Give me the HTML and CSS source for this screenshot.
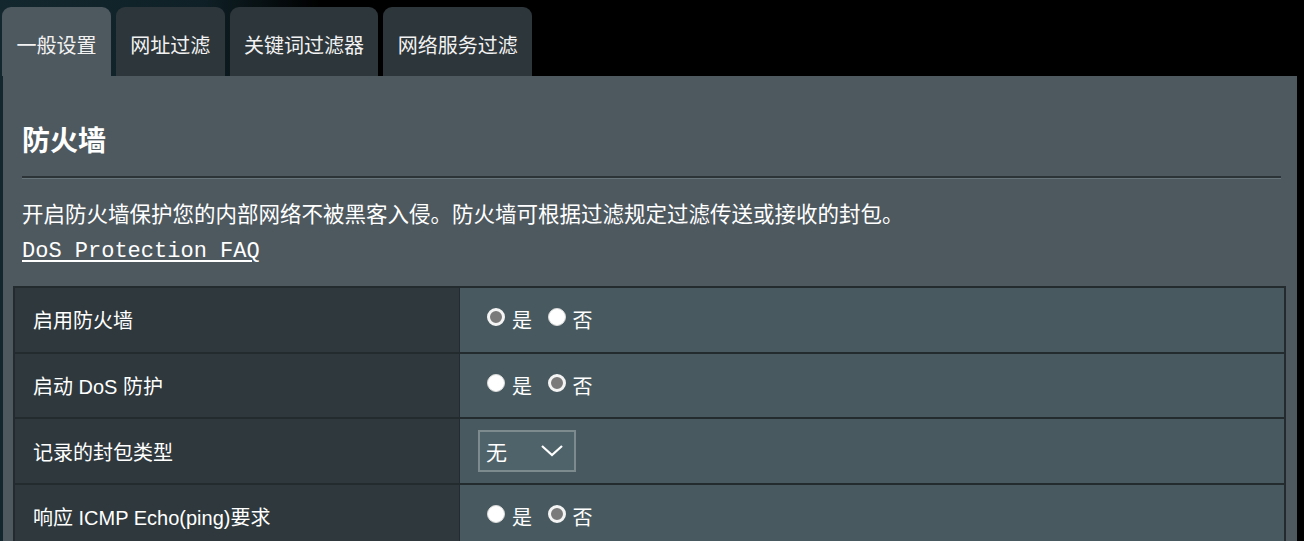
FILE: index.html
```html
<!DOCTYPE html>
<html lang="zh-CN">
<head>
<meta charset="utf-8">
<title>防火墙</title>
<link rel="stylesheet" href="styles.css">
</head>
<body>
<div class="page">
  <nav class="tabs">
    <div class="tab active">一般设置</div>
    <div class="tab">网址过滤</div>
    <div class="tab">关键词过滤器</div>
    <div class="tab">网络服务过滤</div>
  </nav>
  <section class="panel">
    <h1 class="title">防火墙</h1>
    <div class="rule"></div>
    <p class="desc">开启防火墙保护您的内部网络不被黑客入侵。防火墙可根据过滤规定过滤传送或接收的封包。</p>
    <a class="faq" href="#">DoS Protection FAQ</a>
    <table class="settings">
      <tr>
        <th>启用防火墙</th>
        <td>
          <span class="opt"><span class="radio checked"></span>是</span>
          <span class="opt"><span class="radio"></span>否</span>
        </td>
      </tr>
      <tr>
        <th>启动 DoS 防护</th>
        <td>
          <span class="opt"><span class="radio"></span>是</span>
          <span class="opt"><span class="radio checked"></span>否</span>
        </td>
      </tr>
      <tr>
        <th>记录的封包类型</th>
        <td>
          <div class="select"><span>无</span>
            <svg class="chev" width="24" height="14" viewBox="0 0 24 14"><polyline points="2,2 12,11 22,2" fill="none" stroke="#fff" stroke-width="2.2"/></svg>
          </div>
        </td>
      </tr>
      <tr>
        <th>响应 ICMP Echo(ping)要求</th>
        <td>
          <span class="opt"><span class="radio"></span>是</span>
          <span class="opt"><span class="radio checked"></span>否</span>
        </td>
      </tr>
    </table>
  </section>
</div>
</body>
</html>
```
FILE: styles.css
```css
html, body {
  margin: 0;
  padding: 0;
  height: 100%;
  overflow: hidden;
}
body {
  background: linear-gradient(90deg, #13272e 0, #0f2127 200px, #000 320px);
  font-family: "Liberation Sans", "Noto Sans CJK SC", sans-serif;
  color: #fff;
}
.page {
  padding-left: 3px;
  width: 1294px;
}
.tabs {
  display: flex;
  gap: 5px;
  padding-top: 7px;
  margin-left: -1px;
}
.tab {
  height: 69px;
  box-sizing: border-box;
  padding: 27px 14.4px 0;
  background: #2d363b;
  border-radius: 9px 9px 0 0;
  font-size: 20px;
  line-height: 24px;
  color: #f2f2f2;
}
.tab.active {
  background: #4e595f;
}
.panel {
  background: #4e595f;
  padding: 49px 0 0 0;
  height: 480px;
}
.title {
  margin: 0 0 0 19px;
  font-size: 28px;
  line-height: 34px;
  font-weight: bold;
  color: #fff;
}
.rule {
  margin: 17px 16px 0 19px;
  height: 2px;
  background: #2c3438;
  border-bottom: 1px solid #67757b;
}
.desc {
  margin: 23px 0 0 19px;
  font-size: 21.5px;
  line-height: 26px;
  color: #fff;
}
.faq {
  display: inline-block;
  margin: 11px 0 0 19px;
  font-family: "Liberation Mono", monospace;
  font-size: 22px;
  line-height: 26px;
  color: #fff;
  text-decoration: underline;
  text-underline-offset: 3px;
}
.settings {
  margin: 21px 0 0 10px;
  width: 1273px;
  border-collapse: collapse;
  border: 2px solid #242b2f;
}
.settings tr {
  height: 65.7px;
}
.settings th, .settings td {
  border-top: 2px solid #242b2f;
  border-bottom: 2px solid #242b2f;
  padding: 0;
  font-size: 20px;
  font-weight: normal;
  text-align: left;
  vertical-align: middle;
}
.settings th {
  width: 426px;
  padding-left: 18px;
  background: #2e383d;
  border-right: 1px solid #242b2f;
}
.settings td {
  background: #485a60;
  padding-left: 18px;
}
.opt {
  display: inline-flex;
  align-items: center;
  margin-left: 9px;
  margin-right: 1px;
  font-size: 20px;
}
.radio {
  display: inline-block;
  width: 18px;
  height: 18px;
  box-sizing: border-box;
  border-radius: 50%;
  background: #fff;
  border: 1px solid #d8d8d8;
  margin-right: 7px;
  position: relative;
  top: -3px;
}
.radio.checked {
  background: #7a7a7a;
  border: 3px solid #f4f4f4;
}
.select {
  width: 98px;
  height: 42px;
  box-sizing: border-box;
  border: 2px solid #7d8a8e;
  background: #4f636a;
  display: flex;
  align-items: center;
  justify-content: space-between;
  padding: 0 10px 0 6px;
  font-size: 21px;
}
.chev {
  display: block;
}
```
